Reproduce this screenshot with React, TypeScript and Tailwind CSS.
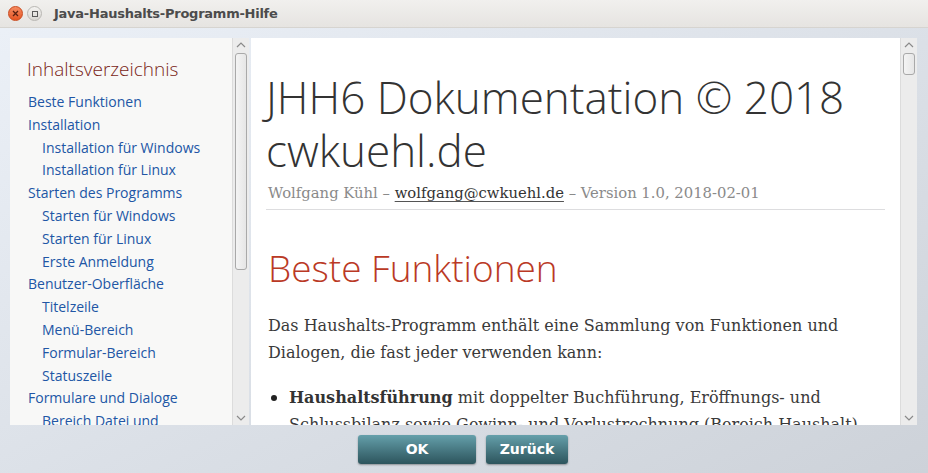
import React from "react";

const toc: { label: string; sub?: boolean }[] = [
  { label: "Beste Funktionen" },
  { label: "Installation" },
  { label: "Installation für Windows", sub: true },
  { label: "Installation für Linux", sub: true },
  { label: "Starten des Programms" },
  { label: "Starten für Windows", sub: true },
  { label: "Starten für Linux", sub: true },
  { label: "Erste Anmeldung", sub: true },
  { label: "Benutzer-Oberfläche" },
  { label: "Titelzeile", sub: true },
  { label: "Menü-Bereich", sub: true },
  { label: "Formular-Bereich", sub: true },
  { label: "Statuszeile", sub: true },
  { label: "Formulare und Dialoge" },
  { label: "Bereich Datei und", sub: true },
];

const ScrollBar = ({ thumbTop, thumbHeight }: { thumbTop: number; thumbHeight: number }) => (
  <div className="w-[17px] h-full bg-[#ececec] border-l border-[#dcdcdc] flex flex-col items-center relative">
    <svg width="10" height="6" viewBox="0 0 10 6" className="mt-[4px]">
      <path d="M1 5 L5 1 L9 5" fill="none" stroke="#8a8a8a" strokeWidth="1.2" />
    </svg>
    <div
      className="absolute left-[2px] w-[12px] rounded-[3px] border border-[#a9a9a9] bg-gradient-to-r from-[#f4f4f4] to-[#e6e6e6]"
      style={{ top: thumbTop, height: thumbHeight }}
    />
    <div className="flex-1" />
    <svg width="10" height="6" viewBox="0 0 10 6" className="mb-[4px]">
      <path d="M1 1 L5 5 L9 1" fill="none" stroke="#8a8a8a" strokeWidth="1.2" />
    </svg>
  </div>
);

export default function App() {
  return (
    <div className="w-[928px] h-[473px] overflow-hidden flex flex-col bg-gradient-to-br from-[#ecf1f8] to-[#cdd2d9]">
      {/* title bar */}
      <div className="h-[28px] flex items-center bg-gradient-to-b from-[#f1f0ee] to-[#e6e4e1] border-b border-[#d6d4d0] shrink-0">
        <div className="ml-[8px] w-[15px] h-[15px] rounded-full bg-gradient-to-b from-[#f58a5f] to-[#e5531f] border border-[#c9481c] flex items-center justify-center">
          <svg width="7" height="7" viewBox="0 0 7 7">
            <path d="M1 1 L6 6 M6 1 L1 6" stroke="#5a2010" strokeWidth="1.3" />
          </svg>
        </div>
        <div className="ml-[4px] w-[15px] h-[15px] rounded-full bg-gradient-to-b from-[#f4f3f1] to-[#d9d7d3] border border-[#b9b7b3] flex items-center justify-center">
          <div className="w-[6px] h-[6px] border border-[#5a5a5a]" />
        </div>
        <div className="ml-[12px] text-[13px] font-bold text-[#4c4c4c] font-['DejaVu_Sans',sans-serif] tracking-[-0.25px]">
          Java-Haushalts-Programm-Hilfe
        </div>
      </div>

      {/* panels */}
      <div className="mt-[10px] mx-[10px] mr-[11px] h-[387px] flex gap-[2px] shrink-0">
        {/* toc */}
        <div className="w-[239px] flex bg-[#f8f8f7]">
          <div className="flex-1 overflow-hidden pl-[17px] pt-[18px] font-['Open_Sans',sans-serif]">
            <div className="text-[19px] font-light text-[#7a2518] leading-[26px]">Inhaltsverzeichnis</div>
            <ul className="mt-[9px] text-[14px] text-[#2156a5] leading-[22.8px]">
              {toc.map((t) => (
                <li key={t.label} className={t.sub ? "pl-[15px] whitespace-nowrap" : "pl-[1px] whitespace-nowrap"}>
                  {t.label}
                </li>
              ))}
            </ul>
          </div>
          <ScrollBar thumbTop={15} thumbHeight={217} />
        </div>

        {/* content */}
        <div className="flex-1 flex bg-white">
          <div className="flex-1 overflow-hidden pl-[17px] pr-[15px] pt-[33px]">
            <h1 className="font-['Open_Sans',sans-serif] font-light text-[44px] leading-[53px] text-[#333] -ml-[2px]">
              JHH6 Dokumentation © 2018 cwkuehl.de
            </h1>
            <div className="mt-[4px] pb-[4px] border-b border-[#dddddf] font-['DejaVu_Serif',serif] text-[14.8px] leading-[24px] text-[#8a8a8a] -ml-[2px] pl-[2px]">
              Wolfgang Kühl – <span className="text-[#333] underline underline-offset-[3px] decoration-[#555]">wolfgang@cwkuehl.de</span> – Version 1.0, 2018-02-01
            </div>
            <h2 className="mt-[36px] font-['Open_Sans',sans-serif] font-light text-[37px] leading-[44px] text-[#ba3925]">
              Beste Funktionen
            </h2>
            <p className="mt-[22px] font-['DejaVu_Serif',serif] text-[16px] leading-[27px] text-[#3a3a3a]">
              Das Haushalts-Programm enthält eine Sammlung von Funktionen und Dialogen, die fast jeder verwenden kann:
            </p>
            <ul className="mt-[18px] font-['DejaVu_Serif',serif] text-[16px] leading-[27px] text-[#3a3a3a]">
              <li className="flex">
                <span className="w-[21px] shrink-0 flex pt-[11px] pl-[3px]">
                  <span className="w-[6px] h-[6px] rounded-full bg-[#222]" />
                </span>
                <span>
                  <b className="text-[#333]">Haushaltsführung</b> mit doppelter Buchführung, Eröffnungs- und Schlussbilanz sowie Gewinn- und Verlustrechnung (Bereich Haushalt)
                </span>
              </li>
            </ul>
          </div>
          <ScrollBar thumbTop={15} thumbHeight={22} />
        </div>
      </div>

      {/* buttons */}
      <div className="mt-[10px] flex justify-center gap-[10px] font-['DejaVu_Sans',sans-serif]">
        <button className="ml-[-2px] w-[118px] h-[29px] rounded-[3px] bg-gradient-to-b from-[#65a0ab] to-[#2d555d] text-white text-[14px] font-bold shadow-[0_1px_2px_rgba(0,0,0,0.35)]">
          OK
        </button>
        <button className="w-[82px] h-[29px] rounded-[3px] bg-gradient-to-b from-[#65a0ab] to-[#2d555d] text-white text-[14px] font-bold shadow-[0_1px_2px_rgba(0,0,0,0.35)]">
          Zurück
        </button>
      </div>
    </div>
  );
}
